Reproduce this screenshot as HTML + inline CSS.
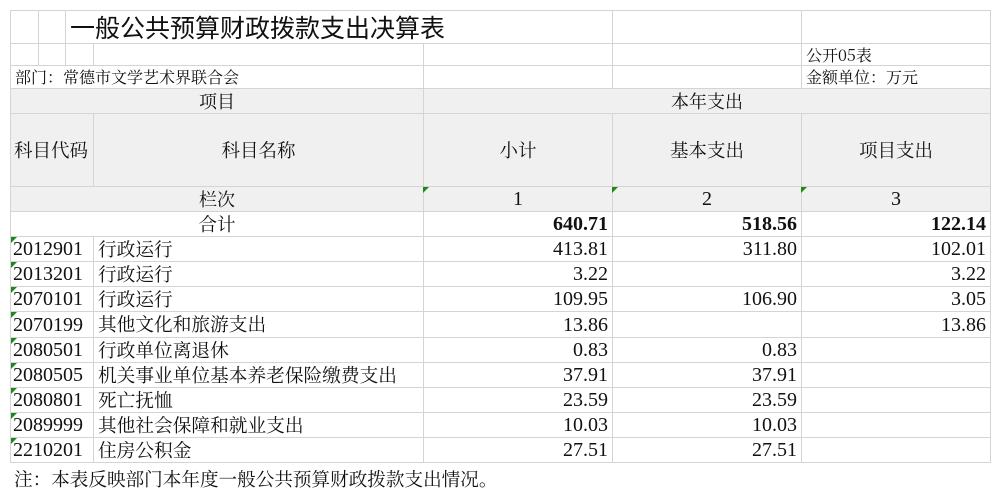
<!DOCTYPE html>
<html><head><meta charset="utf-8"><style>
body{margin:0;width:1000px;height:495px;background:#fff;position:relative;overflow:hidden;font-family:"Noto Serif CJK SC",serif;font-size:16px;color:#111}
.c{position:absolute;box-sizing:border-box;border:1px solid #d4d4d4;white-space:nowrap;display:flex;align-items:center;padding:0 4px;line-height:1}
.g{background:#f0f0f0}
.l{justify-content:flex-start}.m{justify-content:center}.r{justify-content:flex-end}
.n{font-family:"Liberation Serif",serif;font-size:20px}
.b{font-family:"Liberation Serif",serif;font-weight:bold;font-size:20px}
.t{position:absolute;width:0;height:0;border-top:6px solid #1a8a1a;border-right:6px solid transparent}
</style></head><body>
<div class="c" style="left:10px;top:10px;width:29px;height:34px"></div>
<div class="c" style="left:38px;top:10px;width:28px;height:34px"></div>
<div class="c l" style="left:65px;top:10px;width:548px;height:34px;font-family:'Noto Sans CJK SC',sans-serif;font-size:25px;padding-left:4px">一般公共预算财政拨款支出决算表</div>
<div class="c" style="left:612px;top:10px;width:190px;height:34px"></div>
<div class="c" style="left:801px;top:10px;width:190px;height:34px"></div>

<div class="c" style="left:10px;top:43px;width:29px;height:23px"></div>
<div class="c" style="left:38px;top:43px;width:28px;height:23px"></div>
<div class="c" style="left:65px;top:43px;width:29px;height:23px"></div>
<div class="c" style="left:93px;top:43px;width:331px;height:23px"></div>
<div class="c" style="left:423px;top:43px;width:190px;height:23px"></div>
<div class="c" style="left:612px;top:43px;width:190px;height:23px"></div>
<div class="c l" style="left:801px;top:43px;width:190px;height:23px">公开05表</div>

<div class="c l" style="left:10px;top:65px;width:414px;height:24px">部门：常德市文学艺术界联合会</div>
<div class="c" style="left:423px;top:65px;width:190px;height:24px"></div>
<div class="c" style="left:612px;top:65px;width:190px;height:24px"></div>
<div class="c l" style="left:801px;top:65px;width:190px;height:24px">金额单位：万元</div>

<div class="c g m" style="left:10px;top:88px;width:414px;height:26px;font-size:18px">项目</div>
<div class="c g m" style="left:423px;top:88px;width:568px;height:26px;font-size:18px">本年支出</div>

<div class="c g l" style="left:10px;top:113px;width:84px;height:74px;font-size:18.5px;padding-left:3px">科目代码</div>
<div class="c g m" style="left:93px;top:113px;width:331px;height:74px;font-size:18.5px">科目名称</div>
<div class="c g m" style="left:423px;top:113px;width:190px;height:74px;font-size:18.5px">小计</div>
<div class="c g m" style="left:612px;top:113px;width:190px;height:74px;font-size:18.5px">基本支出</div>
<div class="c g m" style="left:801px;top:113px;width:190px;height:74px;font-size:18.5px">项目支出</div>

<div class="c g m" style="left:10px;top:186px;width:414px;height:26px;font-size:18px">栏次</div>
<div class="c g m n" style="left:423px;top:186px;width:190px;height:26px">1</div>
<div class="c g m n" style="left:612px;top:186px;width:190px;height:26px">2</div>
<div class="c g m n" style="left:801px;top:186px;width:190px;height:26px">3</div>
<div class="t" style="left:423px;top:187px"></div><div class="t" style="left:612px;top:187px"></div><div class="t" style="left:801px;top:187px"></div>

<div class="c m" style="left:10px;top:211px;width:414px;height:26px;font-size:18.5px">合计</div>
<div class="c r b" style="left:423px;top:211px;width:190px;height:26px">640.71</div>
<div class="c r b" style="left:612px;top:211px;width:190px;height:26px">518.56</div>
<div class="c r b" style="left:801px;top:211px;width:190px;height:26px">122.14</div>

<div id="rows"></div>
<script>
var d=[["2012901","行政运行","413.81","311.80","102.01"],["2013201","行政运行","3.22","","3.22"],["2070101","行政运行","109.95","106.90","3.05"],["2070199","其他文化和旅游支出","13.86","","13.86"],["2080501","行政单位离退休","0.83","0.83",""],["2080505","机关事业单位基本养老保险缴费支出","37.91","37.91",""],["2080801","死亡抚恤","23.59","23.59",""],["2089999","其他社会保障和就业支出","10.03","10.03",""],["2210201","住房公积金","27.51","27.51",""]];
var ys=[236,261,286,311,337,362,387,412,437,462],h="";
for(var i=0;i<d.length;i++){var y=ys[i],hh=ys[i+1]-y+1;
h+='<div class="c l n" style="left:10px;top:'+y+'px;width:84px;height:'+hh+'px;padding-left:2px">'+d[i][0]+'</div>';
h+='<div class="t" style="left:11px;top:'+(y+1)+'px"></div>';
h+='<div class="c l" style="left:93px;top:'+y+'px;width:331px;height:'+hh+'px;font-size:18.7px">'+d[i][1]+'</div>';
var xs=[423,612,801];for(var j=0;j<3;j++)h+='<div class="c r n" style="left:'+xs[j]+'px;top:'+y+'px;width:190px;height:'+hh+'px">'+d[i][2+j]+'</div>';}
document.getElementById("rows").innerHTML=h;
</script>
<div style="position:absolute;left:14px;top:466px;font-size:18.6px;white-space:nowrap">注：本表反映部门本年度一般公共预算财政拨款支出情况。</div>
</body></html>
